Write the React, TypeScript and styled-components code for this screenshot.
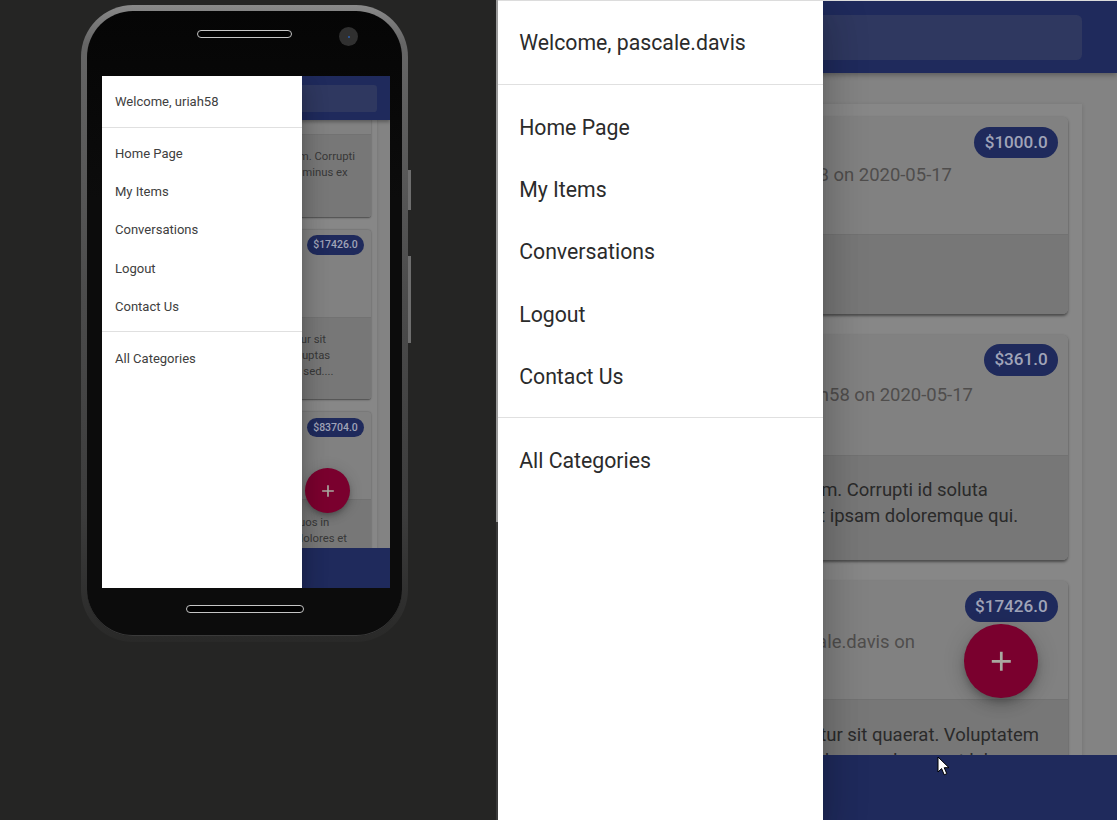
import React from "react";
import styled, { createGlobalStyle, ThemeProvider } from "styled-components";

// colours are the dimmed ones, the app sits behind the open drawer
const NAVY = "#1f2a5c";
const SEARCH = "#2f3860";
const PAGE = "#838383";
const PANEL = "#878787";
const CARD_HEAD = "#818181";
const CARD_BODY = "#777777";
const FAB_RED = "#7a002e";

interface Metrics {
  zoom: number;
  width: number;
  height: number;
  gutter: number;
  cardInset: number;
  chipRight: number;
  feedTop: number;
  fabRight: number;
  bodyBottom: number;
  ink: string;
  bodyInk: string;
}

const phoneMetrics: Metrics = {
  zoom: 0.8333,
  width: 288,
  height: 512,
  gutter: 15.6,
  cardInset: 7.2,
  chipRight: 8.4,
  feedTop: -97.6,
  fabRight: 48,
  bodyBottom: 24.6,
  ink: "#404040",
  bodyInk: "#383838",
};

const fullMetrics: Metrics = {
  zoom: 1.3583,
  width: 619,
  height: 819,
  gutter: 25.8,
  cardInset: 10.3,
  chipRight: 7.4,
  feedTop: 23,
  fabRight: 58.5,
  bodyBottom: 22.7,
  ink: "#2b2b2b",
  bodyInk: "#2a2a2a",
};

interface Line {
  text: string;
  trail: number;
}

interface Post {
  price?: string;
  headHeight: number;
  subGap: number;
  sub: Line[];
  body: Line[];
}

const fullPosts: Post[] = [
  {
    price: "$1000.0",
    headHeight: 87,
    subGap: 3,
    sub: [{ text: "Posted by uriah58 on 2020-05-17", trail: 85.4 }],
    body: [{ text: "Sit amet.", trail: 190 }],
  },
  {
    price: "$361.0",
    headHeight: 89,
    subGap: 4.5,
    sub: [{ text: "Posted by uriah58 on 2020-05-17", trail: 70 }],
    body: [
      { text: "Harum quasi ipsam. Corrupti id soluta", trail: 59 },
      { text: "Sed aut ipsam doloremque qui.", trail: 36.8 },
    ],
  },
  {
    price: "$17426.0",
    headHeight: 87.5,
    subGap: 5,
    sub: [{ text: "Posted by pascale.davis on", trail: 112.7 }],
    body: [
      { text: "Consectetur sit quaerat. Voluptatem", trail: 21.4 },
      { text: "Tempore dolorum ad quaerat labore", trail: 35 },
    ],
  },
];

// the first card is scrolled up under the app bar on the phone
const phonePosts: Post[] = [
  {
    headHeight: 105.8,
    subGap: 3,
    sub: [],
    body: [
      { text: "Harum quasi ipsam. Corrupti", trail: 19.2 },
      { text: "Sed aut ipsam minus ex", trail: 28 },
      { text: "Soluta.", trail: 150 },
    ],
  },
  {
    price: "$17426.0",
    headHeight: 105.8,
    subGap: 3,
    sub: [],
    body: [
      { text: "Consectetur sit", trail: 54 },
      { text: "Voluptatem voluptas", trail: 49 },
      { text: "Reiciendis sed....", trail: 45 },
    ],
  },
  {
    price: "$83704.0",
    headHeight: 105.6,
    subGap: 3,
    sub: [],
    body: [
      { text: "Quisquam dolor quos in", trail: 50 },
      { text: "Maiores dolores et", trail: 28.8 },
    ],
  },
];

const GlobalStyle = createGlobalStyle`
  html, body {
    margin: 0;
    padding: 0;
    overflow: hidden;
    background: #252524;
  }
  * {
    box-sizing: border-box;
  }
`;

const Page = styled.div`
  position: relative;
  display: flex;
  width: 1117px;
  height: 820px;
  overflow: hidden;
  font-family: Roboto, "Liberation Sans", sans-serif;
`;

const DevicePane = styled.div`
  width: 496px;
  flex-shrink: 0;
  padding: 5px 0 0 81px;
  background: #252524;
`;

const PaneDivider = styled.div`
  width: 2px;
  flex-shrink: 0;
  background: linear-gradient(#9a9a9a 0 522px, #3a3a3a 522px);
`;

const PreviewPane = styled.div`
  flex: 1;
  border-top: 1px solid #dcdcdc;
`;

const PhoneBody = styled.div`
  position: relative;
  width: 327px;
  height: 637px;
  padding: 6px;
  border-radius: 52px;
  background: linear-gradient(#8a8a8a, #666 6%, #4c4c4c 45%, #3c3c3c 80%, #292928);
`;

const SideKey = styled.div<{ $top: number; $height: number }>`
  position: absolute;
  top: ${(p) => p.$top}px;
  right: -3px;
  width: 3px;
  height: ${(p) => p.$height}px;
  background: #6e6e6e;
`;

const Bezel = styled.div`
  display: flex;
  flex-direction: column;
  height: 100%;
  padding: 0 12px 0 15px;
  border-radius: 46px;
  background: linear-gradient(#050505, #0c0c0c 30%);
  box-shadow: inset 0 -1px 0 #3a3a3a;
`;

const TopBezel = styled.div`
  position: relative;
  display: flex;
  justify-content: center;
  height: 65px;
  padding: 19px 3px 0 0;
  flex-shrink: 0;
`;

const BottomBezel = styled.div`
  display: flex;
  justify-content: center;
  flex: 1;
  padding: 17px 3px 0 0;
`;

const Speaker = styled.div<{ $width: number }>`
  width: ${(p) => p.$width}px;
  height: 8px;
  border: 1px solid #c4c4c4;
  border-radius: 4px;
  background: #000;
`;

const Camera = styled.div`
  position: absolute;
  top: 16px;
  right: 32px;
  display: flex;
  align-items: center;
  justify-content: center;
  width: 19px;
  height: 19px;
  border-radius: 50%;
  background: #303030;

  &::after {
    content: "";
    width: 2px;
    height: 2px;
    border-radius: 50%;
    background: #2a5fb0;
  }
`;

const Screen = styled.div`
  position: relative;
  display: flex;
  flex-direction: column;
  flex-shrink: 0;
  zoom: ${(p) => p.theme.zoom};
  width: ${(p) => p.theme.width / p.theme.zoom}px;
  height: ${(p) => p.theme.height / p.theme.zoom}px;
  overflow: hidden;
  background: ${PAGE};
`;

const AppBar = styled.header`
  position: relative;
  z-index: 1;
  flex-shrink: 0;
  height: 53px;
  padding: 10.4px ${(p) => p.theme.gutter}px 0 0;
  background: ${NAVY};
  box-shadow: 0 2px 4px rgba(0, 0, 0, 0.3);
`;

const SearchBox = styled.div`
  height: 33.4px;
  border-radius: 4px;
  background: ${SEARCH};
`;

const Scroller = styled.main`
  flex: 1;
  min-height: 0;
  overflow: hidden;
  padding: 0 ${(p) => p.theme.gutter}px;
`;

const FeedPanel = styled.section`
  display: flex;
  flex-direction: column;
  gap: 15.6px;
  margin-top: ${(p) => p.theme.feedTop}px;
  padding: 9.6px ${(p) => p.theme.cardInset}px;
  background: ${PANEL};
  box-shadow: 0 1px 3px rgba(0, 0, 0, 0.15);
`;

const Card = styled.article`
  flex-shrink: 0;
  border-radius: 4px;
  overflow: hidden;
  box-shadow: 0 1px 2px rgba(0, 0, 0, 0.45);
`;

const CardHead = styled.div<{ $height: number }>`
  height: ${(p) => p.$height}px;
  padding: 7px ${(p) => p.theme.chipRight}px 0 16px;
  background: ${CARD_HEAD};
  border-bottom: 1px solid #727272;
`;

const PriceRow = styled.div<{ $gap: number }>`
  display: flex;
  justify-content: flex-end;
  margin-bottom: ${(p) => p.$gap}px;
`;

const PriceChip = styled.span`
  height: 23px;
  padding: 0 7.5px;
  border-radius: 12px;
  background: ${NAVY};
  color: #a0a4b8;
  font-size: 12.6px;
  font-weight: 500;
  line-height: 23px;
  white-space: nowrap;
`;

const SubLine = styled.div<{ $trail: number }>`
  padding-right: ${(p) => p.$trail - p.theme.chipRight}px;
  color: #4f4d4c;
  font-size: 13.6px;
  line-height: 19.2px;
  text-align: right;
  white-space: nowrap;
`;

const BodyLine = styled.div<{ $trail: number }>`
  padding-right: ${(p) => p.$trail}px;
  color: ${(p) => p.theme.bodyInk};
  font-size: 13.6px;
  line-height: 19.2px;
  text-align: right;
  white-space: nowrap;
`;

const CardBody = styled.div`
  padding: 15.8px 0 ${(p) => p.theme.bodyBottom}px 16px;
  background: ${CARD_BODY};
`;

const BottomBar = styled.footer`
  position: relative;
  z-index: 1;
  flex-shrink: 0;
  height: 48px;
  background: ${NAVY};
`;

const Fab = styled.button`
  position: absolute;
  z-index: 2;
  right: ${(p) => p.theme.fabRight}px;
  bottom: 90px;
  display: flex;
  align-items: center;
  justify-content: center;
  width: 54px;
  height: 54px;
  padding: 0;
  border: 0;
  border-radius: 50%;
  background: ${FAB_RED};
  color: #a9a9a0;
  box-shadow: 0 3px 5px -1px rgba(0, 0, 0, 0.2), 0 6px 10px rgba(0, 0, 0, 0.14),
    0 1px 18px rgba(0, 0, 0, 0.12);
`;

const Drawer = styled.nav`
  position: absolute;
  z-index: 3;
  top: 0;
  left: 0;
  bottom: 0;
  width: 239.6px;
  background: #fff;
  color: ${(p) => p.theme.ink};
  box-shadow: 0 8px 10px -5px rgba(0, 0, 0, 0.2), 0 16px 24px 2px rgba(0, 0, 0, 0.14),
    0 6px 30px 5px rgba(0, 0, 0, 0.12);
`;

const DrawerWelcome = styled.div`
  display: flex;
  align-items: center;
  height: 61.9px;
  padding-left: 15.6px;
  border-bottom: 1px solid #e0e0e0;
  font-size: 15.65px;
`;

const DrawerGroup = styled.ul<{ $divided?: boolean }>`
  margin: 0;
  padding: ${(p) => (p.$divided ? "8.3px 0 7px" : "8.7px 0")};
  list-style: none;
  border-bottom: ${(p) => (p.$divided ? "1px solid #e0e0e0" : "0")};
`;

const DrawerItem = styled.li`
  display: flex;
  align-items: center;
  height: 45.8px;
  padding-left: 15.6px;
  font-size: 15.65px;
`;

const PlusIcon = () => (
  <svg width="24" height="24" viewBox="0 0 24 24" fill="currentColor">
    <path d="M19 13h-6v6h-2v-6H5v-2h6V5h2v6h6v2z" />
  </svg>
);

const CursorArrow = styled.svg`
  position: absolute;
  left: 937px;
  top: 756px;
  z-index: 5;
`;

interface MarketAppProps {
  metrics: Metrics;
  user: string;
  posts: Post[];
}

const MarketApp: React.FC<MarketAppProps> = ({ metrics, user, posts }) => (
  <ThemeProvider theme={metrics}>
    <Screen>
      <AppBar>
        <SearchBox />
      </AppBar>
      <Scroller>
        <FeedPanel>
          {posts.map((post) => (
            <Card key={post.body[0].text}>
              <CardHead $height={post.headHeight}>
                {post.price && (
                  <PriceRow $gap={post.subGap}>
                    <PriceChip>{post.price}</PriceChip>
                  </PriceRow>
                )}
                {post.sub.map((line) => (
                  <SubLine key={line.text} $trail={line.trail}>
                    {line.text}
                  </SubLine>
                ))}
              </CardHead>
              <CardBody>
                {post.body.map((line) => (
                  <BodyLine key={line.text} $trail={line.trail}>
                    {line.text}
                  </BodyLine>
                ))}
              </CardBody>
            </Card>
          ))}
        </FeedPanel>
      </Scroller>
      <BottomBar />
      <Fab aria-label="Add item">
        <PlusIcon />
      </Fab>
      <Drawer>
        <DrawerWelcome>Welcome, {user}</DrawerWelcome>
        <DrawerGroup $divided>
          <DrawerItem>Home Page</DrawerItem>
          <DrawerItem>My Items</DrawerItem>
          <DrawerItem>Conversations</DrawerItem>
          <DrawerItem>Logout</DrawerItem>
          <DrawerItem>Contact Us</DrawerItem>
        </DrawerGroup>
        <DrawerGroup>
          <DrawerItem>All Categories</DrawerItem>
        </DrawerGroup>
      </Drawer>
    </Screen>
  </ThemeProvider>
);

const App: React.FC = () => (
  <Page>
    <GlobalStyle />
    <DevicePane>
      <PhoneBody>
        <SideKey $top={165} $height={40} />
        <SideKey $top={251} $height={87} />
        <Bezel>
          <TopBezel>
            <Speaker $width={95} />
            <Camera />
          </TopBezel>
          <MarketApp metrics={phoneMetrics} user="uriah58" posts={phonePosts} />
          <BottomBezel>
            <Speaker $width={118} />
          </BottomBezel>
        </Bezel>
      </PhoneBody>
    </DevicePane>
    <PaneDivider />
    <PreviewPane>
      <MarketApp metrics={fullMetrics} user="pascale.davis" posts={fullPosts} />
    </PreviewPane>
    <CursorArrow width="13" height="21" viewBox="0 0 13 21">
      <path d="M1 1v15l3.6-3.4 2.6 6.2 2.6-1.1-2.6-6h4.8z" fill="#fff" stroke="#000" strokeWidth="1" />
    </CursorArrow>
  </Page>
);

export default App;
